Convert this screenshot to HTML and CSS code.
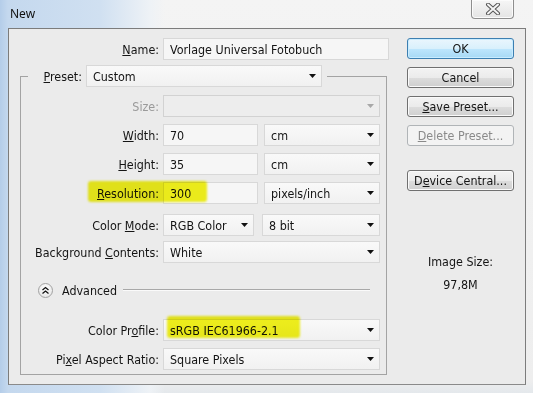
FILE: index.html
```html
<!DOCTYPE HTML>
<html>
    <head>
        <meta charset="utf-8">
        <title>New</title>
        <link rel="stylesheet" href="styles.css">
    </head>
    <body>
        <div class="window">
            <div class="titlebar">
                <span class="title">New</span>
                <div class="close">
                    <svg width="16" height="12" viewBox="0 0 16 12">
                        <path d="M3 1.5 L13 10.5 M13 1.5 L3 10.5" stroke="#555" stroke-width="4" stroke-linecap="round"/>
                        <path d="M3 1.5 L13 10.5 M13 1.5 L3 10.5" stroke="#f4f4f4" stroke-width="2" stroke-linecap="round"/>
                    </svg>
                </div>
            </div>
            <div class="panel">
                <div class="form">
                    <div class="row name-row">
                        <label class="lbl"><u>N</u>ame:</label>
                        <div class="field input">Vorlage Universal Fotobuch</div>
                    </div>
                    <fieldset class="group">
                        <legend class="preset">
                            <label class="lbl"><u>P</u>reset:</label>
                            <div class="field select">Custom<i class="arrow"></i></div>
                        </legend>
                        <div class="rows">
                            <div class="row">
                                <label class="lbl off">Size:</label>
                                <div class="field select disabled"><i class="arrow"></i></div>
                            </div>
                            <div class="row">
                                <label class="lbl"><u>W</u>idth:</label>
                                <div class="pair">
                                    <div class="field input num">70</div>
                                    <div class="field select unit">cm<i class="arrow"></i></div>
                                </div>
                            </div>
                            <div class="row">
                                <label class="lbl"><u>H</u>eight:</label>
                                <div class="pair">
                                    <div class="field input num">35</div>
                                    <div class="field select unit">cm<i class="arrow"></i></div>
                                </div>
                            </div>
                            <div class="row">
                                <label class="lbl"><u>R</u>esolution:</label>
                                <div class="pair">
                                    <div class="field input num">300</div>
                                    <div class="field select unit">pixels/inch<i class="arrow"></i></div>
                                </div>
                            </div>
                            <div class="row mode">
                                <label class="lbl">Color <u>M</u>ode:</label>
                                <div class="pair wide-gap">
                                    <div class="field select color">RGB Color<i class="arrow"></i></div>
                                    <div class="field select bits">8 bit<i class="arrow"></i></div>
                                </div>
                            </div>
                            <div class="row bg">
                                <label class="lbl">Background <u>C</u>ontents:</label>
                                <div class="field select">White<i class="arrow"></i></div>
                            </div>
                            <div class="advanced">
                                <span class="toggle">
                                    <svg width="15" height="15" viewBox="0 0 15 15">
                                        <path d="M4.5 7 L7.5 4.5 L10.5 7 M4.5 10.5 L7.5 8 L10.5 10.5" fill="none" stroke="#111" stroke-width="1.3"/>
                                    </svg>
                                </span>
                                <span class="adv-text">Advanced</span>
                                <span class="rule"></span>
                            </div>
                            <div class="row">
                                <label class="lbl">Color Pr<u>o</u>file:</label>
                                <div class="field select">sRGB IEC61966-2.1<i class="arrow"></i></div>
                            </div>
                            <div class="row">
                                <label class="lbl">Pi<u>x</u>el Aspect Ratio:</label>
                                <div class="field select">Square Pixels<i class="arrow"></i></div>
                            </div>
                        </div>
                    </fieldset>
                </div>
                <div class="side">
                    <div class="btn default">OK</div>
                    <div class="btn">Cancel</div>
                    <div class="btn"><u>S</u>ave Preset...</div>
                    <div class="btn disabled"><u>D</u>elete Preset...</div>
                    <div class="btn device">D<u>e</u>vice Central...</div>
                    <div class="size-info">
                        <div>Image Size:</div>
                        <div>97,8M</div>
                    </div>
                </div>
                <!-- marker strokes drawn over the screenshot -->
                <span class="marker mark-res"></span>
                <span class="marker mark-profile"></span>
            </div>
        </div>
    </body>
</html>
```
FILE: styles.css
```css
body {
    margin: 0;
    width: 533px;
    height: 393px;
    overflow: hidden;
    font-family: "DejaVu Sans Condensed", "DejaVu Sans", sans-serif;
    font-stretch: condensed;
    font-size: 12.4px;
    color: #141414;
}
.window {
    width: 533px;
    height: 393px;
    box-sizing: border-box;
    padding: 0 7px 8px 8px;
    background:
        linear-gradient(90deg, #b4cde9 0px, #c4d8ee 8px, #d0e0f1 100px, #eef2f6 150px, rgba(244,244,244,0) 165px),
        linear-gradient(180deg, #f4f4f4 0px, #eeeeee 380px, #e4e8ec 393px);
}
.titlebar {
    height: 28px;
    display: flex;
    justify-content: space-between;
    align-items: flex-start;
}
.title {
    font-family: "Noto Sans", sans-serif;
    font-stretch: normal;
    font-size: 12px;
    padding: 5px 0 0 2px;
    color: #111;
}
.close {
    width: 41px;
    height: 18px;
    margin-right: 12px;
    border: 1px solid #8e8e8e;
    border-top: none;
    border-radius: 0 0 4px 4px;
    background: linear-gradient(#f6f6f6, #e4e4e4);
    box-shadow: inset 0 0 0 1px #fbfbfb;
    display: flex;
    align-items: center;
    justify-content: center;
}
.panel {
    position: relative;
    height: 357px;
    box-sizing: border-box;
    border: 1px solid #7c7c7c;
    border-bottom-color: #8a8a8a;
    background: #ebebeb;
    display: flex;
}
.form {
    width: 380px;
    padding-top: 9px;
}
.row {
    display: flex;
    align-items: center;
    gap: 4px;
    height: 22px;
}
.lbl {
    width: 138px;
    text-align: right;
    white-space: nowrap;
}
.name-row .lbl {
    width: 150px;
}
.lbl.off {
    color: #9a9a9a;
}
.field {
    height: 22px;
    box-sizing: border-box;
    border: 1px solid #d8d8d8;
    background: #f6f6f6;
    padding: 0 6px;
    display: flex;
    align-items: center;
    flex: 1;
    white-space: nowrap;
}
.name-row .field {
    flex: 0 0 226px;
}
.select {
    justify-content: space-between;
    padding-right: 5px;
    background: linear-gradient(#f9f9f9, #f1f1f1);
}
.select.disabled {
    background: #ededed;
    border-color: #d2d2d2;
}
.arrow {
    width: 7px;
    height: 4px;
    background: #111;
    clip-path: polygon(0 0, 100% 0, 50% 100%);
    margin-left: auto;
}
.disabled .arrow {
    background: #a8a8a8;
}
.group {
    margin: 5px 2px 0 11px;
    padding: 0 0 4px 0;
    border: 1px solid #a3a3a3;
    border-radius: 0;
    min-width: 0;
}
.preset {
    margin-left: 7px;
    padding: 0 5px 0 0;
    display: flex;
    align-items: center;
    gap: 4px;
}
.preset .lbl {
    width: 54px;
}
.preset .field {
    width: 236px;
    flex: none;
}
.rows {
    padding-top: 8px;
    display: flex;
    flex-direction: column;
    gap: 7px;
}
.rows .row {
    width: 359px;
}
.pair {
    flex: 1;
    display: flex;
    gap: 6px;
}
.pair.wide-gap {
    gap: 8px;
}
.num {
    flex: 0 0 95px;
}
.color {
    flex: 0 0 91px;
}
.row.mode {
    margin-top: 3px;
}
.row.bg {
    margin-top: -2px;
}
.advanced {
    display: flex;
    align-items: center;
    height: 16px;
    margin: 12px 0 14px 0;
    padding-left: 17px;
}
.toggle {
    width: 15px;
    height: 15px;
    box-sizing: border-box;
    border-radius: 50%;
    border: 1px solid #a2a2a2;
    background: radial-gradient(circle at 50% 35%, #ffffff, #e0e0e0);
    display: flex;
}
.toggle svg {
    margin: -1px;
}
.adv-text {
    margin-left: 9px;
}
.rule {
    flex: 1;
    height: 0;
    border-top: 1px solid #a8a8a8;
    border-bottom: 1px solid #fafafa;
    margin: 0 16px 0 6px;
}
.side {
    padding: 9px 0 0 18px;
    display: flex;
    flex-direction: column;
    gap: 8px;
}
.btn {
    width: 107px;
    height: 21px;
    box-sizing: border-box;
    border: 1px solid #707070;
    border-radius: 3px;
    background: linear-gradient(#f3f3f3 0%, #ebebeb 50%, #dddddd 51%, #cfcfcf 100%);
    box-shadow: inset 0 0 0 1px #fafafa;
    display: flex;
    align-items: center;
    justify-content: center;
    white-space: nowrap;
}
.btn.default {
    border-color: #3c7fb1;
    background: linear-gradient(#eaf6fd 0%, #d9f0fc 50%, #bee6fd 51%, #a7d9f5 100%);
    box-shadow: inset 0 0 0 1px #c9ecff;
}
.btn.disabled {
    border-color: #b0b4b7;
    background: #f3f3f3;
    color: #8a8a8a;
    box-shadow: none;
}
.btn.device {
    margin-top: 16px;
}
.size-info {
    margin-top: 51px;
    width: 107px;
    text-align: center;
    line-height: 23px;
}
.marker {
    position: absolute;
    background: #f3f31c;
    mix-blend-mode: multiply;
    filter: blur(1px);
    border-radius: 3px;
}
.mark-res {
    left: 79px;
    top: 152px;
    width: 119px;
    height: 21px;
}
.mark-profile {
    left: 158px;
    top: 287px;
    width: 133px;
    height: 22px;
}
```
